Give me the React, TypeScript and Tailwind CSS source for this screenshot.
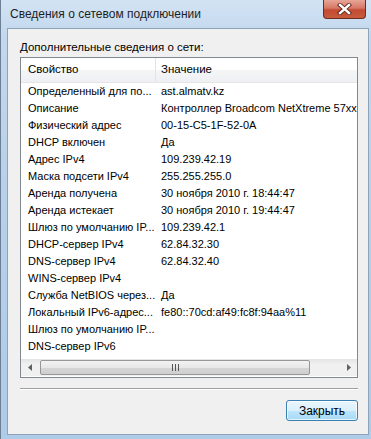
import React from "react";

const rows: [string, string][] = [
  ["Определенный для по...", "ast.almatv.kz"],
  ["Описание", "Контроллер Broadcom NetXtreme 57xx Gigabit Controller"],
  ["Физический адрес", "00-15-C5-1F-52-0A"],
  ["DHCP включен", "Да"],
  ["Адрес IPv4", "109.239.42.19"],
  ["Маска подсети IPv4", "255.255.255.0"],
  ["Аренда получена", "30 ноября 2010 г. 18:44:47"],
  ["Аренда истекает", "30 ноября 2010 г. 19:44:47"],
  ["Шлюз по умолчанию IP...", "109.239.42.1"],
  ["DHCP-сервер IPv4", "62.84.32.30"],
  ["DNS-сервер IPv4", "62.84.32.40"],
  ["WINS-сервер IPv4", ""],
  ["Служба NetBIOS через...", "Да"],
  ["Локальный IPv6-адрес...", "fe80::70cd:af49:fc8f:94aa%11"],
  ["Шлюз по умолчанию IP...", ""],
  ["DNS-сервер IPv6", ""],
];

export default function App() {
  return (
    <div
      className="relative w-[371px] h-[439px] overflow-hidden text-[#000]"
      style={{ fontFamily: '"Liberation Sans", Arial, sans-serif' }}
    >
      {/* window frame */}
      <div className="absolute inset-0 bg-[linear-gradient(180deg,#d3e3f4_0%,#c3d8ee_8%,#b9d1ea_40%,#aecbe8_100%)] border-l border-[#6d7f94] flex flex-col">
        {/* title bar */}
        <div className="h-[28px] flex items-center pl-[9px] text-[12px] text-[#1e1e1e] shrink-0">
          Сведения о сетевом подключении
        </div>
        {/* client area */}
        <div className="ml-[6px] mr-[2px] h-[407px] bg-[#f0f0f0] border border-[#8fa3b8] flex flex-col text-[11px]">
          <div className="pl-[12px] pt-[12px] h-[28px] leading-[13px] text-[11.5px]">
            Дополнительные сведения о сети:
          </div>
          <div className="ml-[12px] w-[338px] h-[321px] bg-white border border-[#828790] flex flex-col overflow-hidden">
            {/* header */}
            <div className="h-[25px] flex shrink-0 bg-[linear-gradient(180deg,#ffffff_0%,#ffffff_50%,#f4f5f7_51%,#eef0f3_100%)] border-b border-[#e5e5e5] text-[11.5px]">
              <div className="w-[135px] pl-[7px] flex items-center border-r border-[#e2e3e5]">
                Свойство
              </div>
              <div className="flex-1 pl-[5px] flex items-center">Значение</div>
            </div>
            {/* rows */}
            <div className="flex-1 flex flex-col text-[11px]">
              {rows.map(([p, v], i) => (
                <div key={i} className="h-[17px] flex items-center shrink-0 whitespace-nowrap">
                  <div className="w-[135px] pl-[7px] overflow-hidden">{p}</div>
                  <div className="flex-1 pl-[5px] overflow-hidden">{v}</div>
                </div>
              ))}
            </div>
            {/* horizontal scrollbar */}
            <div className="h-[17px] shrink-0 flex items-center bg-[linear-gradient(180deg,#e3e3e3,#f0f0f0_30%,#f0f0f0)] mb-[1px]">
              <div className="w-[17px] h-[17px] flex items-center justify-center">
                <svg width="4" height="7" viewBox="0 0 4 7">
                  <path d="M4 0 L0 3.5 L4 7 Z" fill="#606060" />
                </svg>
              </div>
              <div className="ml-[2px] w-[270px] h-[15px] rounded-[2px] border border-[#979797] bg-[linear-gradient(180deg,#f3f3f3_0%,#e8e8e8_50%,#d6d6d6_51%,#cfcfcf_100%)] flex items-center justify-center">
                <svg width="7" height="7" viewBox="0 0 7 7">
                  <path d="M0.5 0 V7 M3.5 0 V7 M6.5 0 V7" stroke="#555" strokeWidth="1" />
                </svg>
              </div>
              <div className="flex-1" />
              <div className="w-[17px] h-[17px] flex items-center justify-center">
                <svg width="4" height="7" viewBox="0 0 4 7">
                  <path d="M0 0 L4 3.5 L0 7 Z" fill="#606060" />
                </svg>
              </div>
            </div>
          </div>
          {/* separator */}
          <div className="ml-[12px] w-[338px] mt-[10px] h-[2px] border-t border-[#a0a0a0] border-b-white border-b" />
          {/* button row */}
          <div className="flex justify-end pr-[10px] mt-[10px]">
            <button className="w-[72px] h-[21px] rounded-[3px] border border-[#3c7fb1] bg-[linear-gradient(180deg,#eaf6fd_0%,#d9f0fc_50%,#bee6fd_51%,#a7d9f5_100%)] text-[12px] shadow-[inset_0_0_0_1px_rgba(255,255,255,0.7)] flex items-center justify-center">
              Закрыть
            </button>
          </div>
        </div>
      </div>
      {/* close button */}
      <div className="absolute left-[323px] top-[0px] w-[43px] h-[19px] rounded-b-[4px] border border-t-0 border-[#6e2b22] bg-[linear-gradient(180deg,#e7a597_0%,#d67765_45%,#c34a33_55%,#c75b3d_100%)] flex items-center justify-center">
        <svg width="15" height="12" viewBox="0 0 15 12">
          <path d="M3 2 L12 10 M12 2 L3 10" stroke="#5a241c" strokeWidth="4.2" strokeLinecap="square" />
          <path d="M3 2 L12 10 M12 2 L3 10" stroke="#ffffff" strokeWidth="2.4" strokeLinecap="square" />
        </svg>
      </div>
    </div>
  );
}
